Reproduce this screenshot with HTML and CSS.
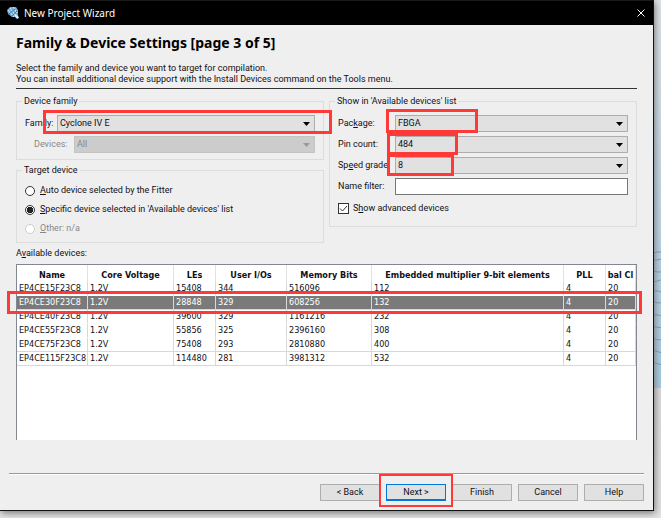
FILE: index.html
```html
<!DOCTYPE html>
<html lang="en">
<head>
<meta charset="utf-8">
<title>New Project Wizard</title>
<link rel="stylesheet" href="styles.css">
</head>
<body>
<svg class="scenery" viewBox="0 0 7 390" preserveAspectRatio="none" aria-hidden="true">
  <path d="M0 254l3-1h4M0 261h3l4-1M0 272l3 1h4M0 283l7-2M0 292h3l4 1M0 303l3 1h4M0 316h3l4 1M0 328l7 1M0 340l3 1h4M0 352l7 2M0 364l3 1 4 1" fill="none" stroke="#719ec4"/>
</svg>
<main class="window">
  <header class="titlebar">
    <svg class="logo" viewBox="0 0 12 12" aria-hidden="true">
      <path d="M3 0h6l2 3v5l1 3-2 1-2-2H5L1 7 0 3z" fill="#6fa9d2"/>
      <path d="M3 1l6 8M6 0l4 6M1 3l6 7" stroke="#dceefa" fill="none"/>
      <path d="M8 2L2 7M10 4L5 9" stroke="#397caf" fill="none"/>
      <path d="M8 8l3 3" stroke="#e4f1fa" stroke-width="2"/>
    </svg>
    <span class="caption">New Project Wizard</span>
    <button class="close" aria-label="Close"><svg viewBox="0 0 8 8"><path d="M.5 .5l7 7M7.5 .5l-7 7" stroke="#fff" fill="none"/></svg></button>
  </header>
  <div class="page">
    <h1>Family &amp; Device Settings [page 3 of 5]</h1>
    <p class="intro">Select the family and device you want to target for compilation.<br>You can install additional device support with the Install Devices command on the Tools menu.</p>
    <div class="groups">
      <div class="stack">
        <fieldset class="family">
          <legend>Device family</legend>
          <div class="row">
            <label for="family">Family:</label>
            <div class="combo"><select id="family"><option>Cyclone IV E</option></select><svg class="arrow" viewBox="0 0 7 4"><path d="M0 0h7L3.500 4z"/></svg><span class="mark mark-family"></span></div>
          </div>
          <div class="row indent">
            <label for="devices">Devices:</label>
            <div class="combo off"><select id="devices" disabled><option>All</option></select><svg class="arrow" viewBox="0 0 7 4"><path d="M0 0h7L3.500 4z"/></svg></div>
          </div>
        </fieldset>
        <fieldset class="target">
          <legend>Target device</legend>
          <label class="choice"><input type="radio" name="target"><span><u>A</u>uto device selected by the Fitter</span></label>
          <label class="choice"><input type="radio" name="target" checked><span><u>S</u>pecific device selected in 'Available devices' list</span></label>
          <label class="choice off"><input type="radio" name="target" disabled><span><u>O</u>ther: n/a</span></label>
        </fieldset>
      </div>
      <fieldset class="filters">
        <legend>Show in 'Available devices' list</legend>
        <div class="row">
          <label for="package">Pac<u>k</u>age:</label>
          <div class="combo"><select id="package"><option>FBGA</option></select><svg class="arrow" viewBox="0 0 7 4"><path d="M0 0h7L3.500 4z"/></svg><span class="mark mark-package"></span></div>
        </div>
        <div class="row">
          <label for="pins">Pin count:</label>
          <div class="combo"><select id="pins"><option>484</option></select><svg class="arrow" viewBox="0 0 7 4"><path d="M0 0h7L3.500 4z"/></svg><span class="mark mark-pins"></span></div>
        </div>
        <div class="row">
          <label for="speed">Sp<u>e</u>ed grade:</label>
          <div class="combo"><select id="speed"><option>8</option></select><svg class="arrow" viewBox="0 0 7 4"><path d="M0 0h7L3.500 4z"/></svg><span class="mark mark-speed"></span></div>
        </div>
        <div class="row">
          <label for="filter">Name filter:</label>
          <input class="text" id="filter" type="text">
        </div>
        <div class="check">
          <span class="box"><input type="checkbox" id="advanced" checked><svg viewBox="0 0 11 11" aria-hidden="true"><path d="M2 5.500l2.500 2.500L9 3" fill="none" stroke="#333"/></svg></span>
          <label for="advanced">S<u>h</u>ow advanced devices</label>
        </div>
      </fieldset>
    </div>
    <div class="list-label" id="list-label">A<u>v</u>ailable devices:</div>
    <div class="list">
      <table aria-labelledby="list-label">
        <colgroup><col class="c1"><col class="c2"><col class="c3"><col class="c4"><col class="c5"><col class="c6"><col class="c7"><col class="c8"></colgroup>
        <thead><tr><th>Name</th><th>Core Voltage</th><th>LEs</th><th>User I/Os</th><th>Memory Bits</th><th>Embedded multiplier 9-bit elements</th><th>PLL</th><th>bal Cl</th></tr></thead>
        <tbody>
          <tr><td>EP4CE15F23C8</td><td>1.2V</td><td>15408</td><td>344</td><td>516096</td><td>112</td><td>4</td><td>20</td></tr>
          <tr class="selected"><td>EP4CE30F23C8<span class="mark mark-row"></span></td><td>1.2V</td><td>28848</td><td>329</td><td>608256</td><td>132</td><td>4</td><td>20</td></tr>
          <tr><td>EP4CE40F23C8</td><td>1.2V</td><td>39600</td><td>329</td><td>1161216</td><td>232</td><td>4</td><td>20</td></tr>
          <tr><td>EP4CE55F23C8</td><td>1.2V</td><td>55856</td><td>325</td><td>2396160</td><td>308</td><td>4</td><td>20</td></tr>
          <tr class="lined"><td>EP4CE75F23C8</td><td>1.2V</td><td>75408</td><td>293</td><td>2810880</td><td>400</td><td>4</td><td>20</td></tr>
          <tr class="lined"><td>EP4CE115F23C8</td><td>1.2V</td><td>114480</td><td>281</td><td>3981312</td><td>532</td><td>4</td><td>20</td></tr>
        </tbody>
      </table>
    </div>
  </div>
  <footer class="actions">
    <button>&lt; Back</button>
    <button class="primary">Next &gt;<span class="mark mark-next"></span></button>
    <button>Finish</button>
    <button>Cancel</button>
    <button>Help</button>
  </footer>
</main>
</body>
</html>
```
FILE: styles.css
```css
* { box-sizing: border-box; }

body {
  margin: 0;
  min-height: 100vh;
  display: flex;
  padding: 0 7px 7px 0;
  background: linear-gradient(#dde3e7, #c6d8e5 30%, #a5cae2 75%, #dcdadd 75%, #e4e3e4);
  font: 9px/11px Roboto, "Noto Sans", sans-serif;
  color: #101018;
}

.scenery {
  position: absolute;
  right: 0;
  top: 0;
  width: 7px;
  height: 75vh;
}

.window {
  flex: 1;
  min-width: 0;
  display: flex;
  flex-direction: column;
  background: #efefef;
  border-right: 1px solid #111;
  border-bottom: 1px solid #111;
  box-shadow: 1px 2px 7px #777;
  position: relative;
}

.titlebar {
  display: flex;
  align-items: center;
  height: 25px;
  padding: 0 8px 0 7px;
  background: #000;
  border-top: 1px solid #1a1a1a;
  color: #fff;
}

.logo { width: 12px; height: 12px; }
.caption { flex: 1; margin-left: 5px; font: 10px/16px "Noto Sans", sans-serif; }
.close { width: 8px; height: 8px; padding: 0; border: 0; background: none; }
.close svg { display: block; }

.page {
  flex: 1;
  display: flex;
  flex-direction: column;
  padding: 9px 16px 0;
}

h1 { margin: 0; font: bold 14px/17px "Noto Sans", sans-serif; color: #000; }

.intro {
  margin: 12px 0 7px;
  padding-bottom: 3px;
  border-bottom: 1px solid #333;
}

.groups { display: grid; grid-template-columns: 1fr 1fr; align-items: start; gap: 5px; }
.stack { display: flex; flex-direction: column; gap: 5px; }

fieldset {
  min-width: 0;
  margin: 0;
  padding: 8px;
  border: 1px solid #dcdcdc;
}

legend { padding: 0 2px; margin-left: -3px; line-height: 11px; }
.row { display: flex; align-items: center; height: 17px; }
.row + .row { margin-top: 4px; }
.family label { width: 32px; }
.indent label { width: 40px; margin-left: 9px; color: #888; }
.filters label { width: 57px; }
.family { padding-bottom: 6px; }
.filters { padding-bottom: 12px; }

.combo { position: relative; flex: 1; height: 17px; }

select, .text {
  appearance: none;
  width: 100%;
  height: 17px;
  padding: 0 2px;
  border: 1px solid #adadad;
  border-radius: 0;
  background: #e1e1e1;
  color: #101018;
  font: inherit;
}

.arrow { position: absolute; right: 5px; top: 7px; width: 7px; height: 4px; fill: #000; }
.off select { background: #ccc; border-color: #c4c4c4; color: #888; opacity: 1; }
.off .arrow { fill: #999; }
.text { flex: 1; min-width: 0; background: #fff; border-color: #777; }

.target { padding-top: 5px; padding-bottom: 4px; }
.choice { display: flex; align-items: center; gap: 5px; height: 19px; }
.choice.off { color: #888; }

input[type="radio"] {
  appearance: none;
  width: 10px;
  height: 10px;
  margin: 0;
  border: 1px solid #333;
  border-radius: 50%;
  background: #fff;
}
input[type="radio"]:checked { background: radial-gradient(circle, #222 0 3px, #fff 3px); }
input[type="radio"]:disabled { border-color: #ccc; }

.check { display: flex; align-items: center; gap: 4px; margin-top: 8px; }
.filters .check label { width: auto; }
.box { position: relative; width: 11px; height: 11px; }
.box input { appearance: none; display: block; width: 11px; height: 11px; margin: 0; border: 1px solid #333; background: #fff; }
.box svg { position: absolute; inset: 0; pointer-events: none; }

.list-label { margin: 5px 0; }

.list {
  flex: 1;
  background: #fff;
  border: 1px solid #828790;
  border-bottom: 0;
}

table { width: 100%; table-layout: fixed; border-collapse: separate; border-spacing: 0; font-family: "DejaVu Sans Condensed", "Noto Sans", sans-serif; }
.c1 { width: 71px; }
.c2 { width: 86px; }
.c3 { width: 42px; }
.c4 { width: 71px; }
.c5 { width: 85px; }
.c6 { width: 192px; }
.c7 { width: 42px; }
th { height: 17px; padding: 2px 0 0; font-weight: bold; line-height: 14px; border-right: 1px solid #e2e2e2; white-space: nowrap; }
td { height: 14px; padding: 0 0 0 2px; line-height: 13px; border-right: 1px solid #d8d8d8; border-bottom: 1px solid #fff; white-space: nowrap; }
.lined td, .selected td { border-bottom-color: #d8d8d8; }
.selected { position: relative; }
.selected td { background: #7a7a7a; color: #fff; }

.actions {
  display: flex;
  justify-content: flex-end;
  gap: 6px;
  margin: 33px 9px 0;
  padding: 10px 0 9px;
  border-top: 1px solid #999;
  box-shadow: inset 0 1px #fff;
}

.actions button {
  position: relative;
  width: 60px;
  height: 17px;
  padding: 0;
  border: 1px solid #adadad;
  background: #e1e1e1;
  color: #101018;
  font: inherit;
}
.actions .primary { border: 1px solid #0078d7; border-bottom-width: 2px; }

.mark { position: absolute; z-index: 1; border: 3px solid #ff3938; pointer-events: none; }
.mark-family { inset: -5px -17px -2px -14px; }
.mark-package { left: -9px; top: -6px; width: 92px; height: 24px; }
.mark-pins { left: -8px; top: -3px; width: 71px; height: 22px; }
.mark-speed { left: -8px; top: -3px; width: 67px; height: 22px; }
.mark-row { inset: -5px -6px -4px -10px; }
.mark-next { inset: -11px -8px -8px; border-width: 2px; }
```
